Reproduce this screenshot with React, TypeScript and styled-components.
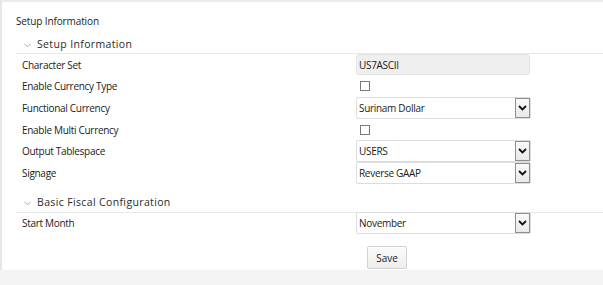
import React from "react";
import styled, { createGlobalStyle } from "styled-components";

const Global = createGlobalStyle`
  html, body { margin: 0; padding: 0; background: #f4f4f4; }
  body { font-family: "Open Sans", "Noto Sans", Arial, sans-serif; color: #333; }
  * { box-sizing: border-box; }
`;

const Panel = styled.div`
  background: #fff;
  border-top: 2px solid #ebebeb;
  border-left: 2px solid #e6e6e6;
  padding: 10px 0 0 14px;
  height: 270px;
`;

const Title = styled.div`
  font-size: 10px;
  line-height: 18px;
  height: 18px;
  letter-spacing: -0.12px;
  color: #222;
  margin-bottom: 5px;
`;

const SectionHeader = styled.div<{ $gap?: number }>`
  display: flex;
  align-items: center;
  gap: 6px;
  height: ${(p) => 19 + (p.$gap ?? 0)}px;
  padding: ${(p) => p.$gap ?? 0}px 0 1px 8px;
  border-bottom: 1px solid #e9e9e9;
  font-size: 10.5px;
  letter-spacing: 0.36px;
  color: #2a2a2a;
`;

const Chevron = () => (
  <svg width="7" height="5" viewBox="0 0 7 5" style={{ marginTop: 3 }}>
    <path d="M0.5 0.8 L3.5 3.8 L6.5 0.8" fill="none" stroke="#aaa" strokeWidth="1" />
  </svg>
);

const Rows = styled.div`
  display: grid;
  grid-template-columns: 334px 175px;
  grid-auto-rows: 21.6px;
  padding-left: 6px;
`;

const Label = styled.div`
  display: flex;
  align-items: center;
  font-size: 10px;
  letter-spacing: -0.3px;
  color: #1a1a1a;
`;

const Cell = styled.div`
  display: flex;
  align-items: center;
`;

const ReadOnly = styled.div`
  width: 174px;
  height: 21px;
  background: #efefef;
  border: 1px solid #e4e4e4;
  border-radius: 3px;
  font-size: 10px;
  letter-spacing: -0.3px;
  color: #1a1a1a;
  display: flex;
  align-items: center;
  padding-left: 2px;
`;

const Check = styled.span`
  display: inline-block;
  width: 10px;
  height: 10px;
  margin-left: 4px;
  border: 1px solid #7a7a7a;
  background: #fff;
`;

const SelectBox = styled.div`
  width: 175px;
  height: 22px;
  border: 1px solid #dcdcdc;
  border-radius: 2px;
  display: flex;
  align-items: center;
  background: #fff;
`;

const SelectText = styled.span`
  flex: 1;
  font-size: 10px;
  letter-spacing: -0.3px;
  color: #1a1a1a;
  padding-left: 2px;
`;

const ArrowBox = styled.span`
  width: 15px;
  height: 20px;
  border: 1px solid #8f8f8f;
  background: linear-gradient(#fafafa, #e9e9e9);
  display: flex;
  align-items: center;
  justify-content: center;
`;

const Arrow = () => (
  <svg width="9" height="6" viewBox="0 0 9 6">
    <path d="M1 1 L4.5 4.5 L8 1" fill="none" stroke="#111" strokeWidth="1.8" />
  </svg>
);

const Footer = styled.div`
  display: grid;
  grid-template-columns: 351px auto;
  padding-top: 12px;
`;

const SaveButton = styled.button`
  grid-column: 2;
  width: 40px;
  height: 23px;
  padding: 0;
  border: 1px solid #d2d2d2;
  border-radius: 2px;
  background: linear-gradient(#fbfbfb, #ededed);
  font-family: "Open Sans", "Noto Sans", Arial, sans-serif;
  font-size: 10px;
  color: #1a1a1a;
`;

const Select = ({ value }: { value: string }) => (
  <SelectBox>
    <SelectText>{value}</SelectText>
    <ArrowBox>
      <Arrow />
    </ArrowBox>
  </SelectBox>
);

export default function App() {
  return (
    <>
      <Global />
      <Panel>
        <Title>Setup Information</Title>
        <SectionHeader>
          <Chevron />
          <span>Setup Information</span>
        </SectionHeader>
        <Rows>
          <Label>Character Set</Label>
          <Cell>
            <ReadOnly>US7ASCII</ReadOnly>
          </Cell>
          <Label>Enable Currency Type</Label>
          <Cell>
            <Check />
          </Cell>
          <Label>Functional Currency</Label>
          <Cell>
            <Select value="Surinam Dollar" />
          </Cell>
          <Label>Enable Multi Currency</Label>
          <Cell>
            <Check />
          </Cell>
          <Label>Output Tablespace</Label>
          <Cell>
            <Select value="USERS" />
          </Cell>
          <Label>Signage</Label>
          <Cell>
            <Select value="Reverse GAAP" />
          </Cell>
        </Rows>
        <SectionHeader $gap={10}>
          <Chevron />
          <span>Basic Fiscal Configuration</span>
        </SectionHeader>
        <Rows>
          <Label>Start Month</Label>
          <Cell>
            <Select value="November" />
          </Cell>
        </Rows>
        <Footer>
          <SaveButton>Save</SaveButton>
        </Footer>
      </Panel>
    </>
  );
}
